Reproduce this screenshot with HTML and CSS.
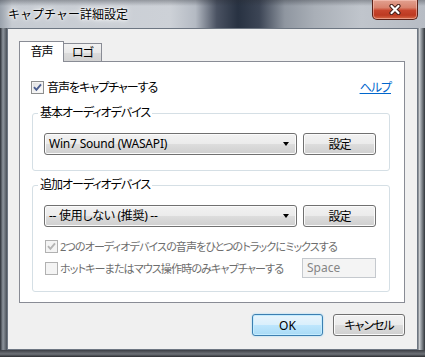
FILE: index.html
```html
<!DOCTYPE html>
<html lang="ja">

<head>
    <meta charset="UTF-8">
    <title>キャプチャー詳細設定</title>
    <link rel="stylesheet" href="styles.css">
</head>

<body>
    <div class="window">
        <!-- 타이틀 바 -->
        <div class="titlebar">
            <span class="title">キャプチャー詳細設定</span>
            <div class="close">
                <svg width="14" height="11" viewBox="0 0 14 11">
                    <path d="M3.5 2 L10.5 9 M10.5 2 L3.5 9" stroke="#47201a" stroke-width="4.2" stroke-linecap="round" fill="none" />
                    <path d="M3.5 2 L10.5 9 M10.5 2 L3.5 9" stroke="#fff" stroke-width="2.2" stroke-linecap="round" fill="none" />
                </svg>
            </div>
        </div>

        <div class="frame">
            <div class="client">
                <!-- 탭 -->
                <div class="tabs">
                    <div class="tab active">音声</div>
                    <div class="tab">ロゴ</div>
                </div>

                <div class="panel">
                    <div class="toprow">
                        <label class="check">
                            <span class="box">
                                <svg width="11" height="11" viewBox="0 0 11 11"><path d="M2 5.2 L4.4 7.8 L9 2.4" stroke="#4a5d8f" stroke-width="1.9" fill="none" /></svg>
                            </span>
                            音声をキャプチャーする
                        </label>
                        <a class="help" href="#">ヘルプ</a>
                    </div>

                    <fieldset class="group">
                        <legend>基本オーディオデバイス</legend>
                        <div class="devrow">
                            <div class="combo"><span class="latin">Win7 Sound (WASAPI)</span><span class="arrow"></span></div>
                            <div class="btn">設定</div>
                        </div>
                    </fieldset>

                    <fieldset class="group second">
                        <legend>追加オーディオデバイス</legend>
                        <div class="devrow">
                            <div class="combo"><span>-- 使用しない (推奨) --</span><span class="arrow"></span></div>
                            <div class="btn">設定</div>
                        </div>
                        <label class="opt first disabled">
                            <span class="box off">
                                <svg width="11" height="11" viewBox="0 0 11 11"><path d="M2 5.2 L4.4 7.8 L9 2.4" stroke="#b4b4b4" stroke-width="1.9" fill="none" /></svg>
                            </span>
                            <span class="label">2つのオーディオデバイスの音声をひとつのトラックにミックスする</span>
                        </label>
                        <label class="opt disabled">
                            <span class="box off"></span>
                            <span class="label">ホットキーまたはマウス操作時のみキャプチャーする</span>
                            <span class="keybox">Space</span>
                        </label>
                    </fieldset>
                </div>

                <!-- 하단 버튼 -->
                <div class="footer">
                    <div class="btn ok">OK</div>
                    <div class="btn cancel">キャンセル</div>
                </div>
            </div>
        </div>
    </div>
</body>

</html>
```

FILE: styles.css
```css
/* 초기화 */
* {
    box-sizing: border-box;
}

body {
    margin: 0;
    background: #2f333a;
    font-family: "Noto Sans", "Noto Sans CJK JP", sans-serif;
    font-size: 12px;
    font-feature-settings: "palt";
    letter-spacing: -1px;
    color: #000;
}

/* 창 */
.window {
    width: 425px;
    height: 357px;
    display: flex;
    flex-direction: column;
    overflow: hidden;
}

.titlebar {
    height: 28px;
    flex: none;
    display: flex;
    justify-content: space-between;
    align-items: flex-start;
    padding-left: 8px;
    background:
        linear-gradient(to bottom, rgba(40, 44, 52, .35) 0, rgba(255, 255, 255, 0) 6px),
        linear-gradient(to right, #9aa2ac 0, #c6cbd2 12px, #cdd1d7 40%, #b4bac3 46%, #4a5262 51%, #283242 56%, #3c4555 61%, #8f96a0 67%, #a9afb7 74%, #c0c5cc 85%, #b7bcc4 100%);
}

.title {
    font-family: "Noto Sans CJK JP", sans-serif;
    font-feature-settings: normal;
    letter-spacing: 0;
    font-size: 12px;
    line-height: 16px;
    margin-top: 6px;
    text-shadow: 0 0 4px #fff, 0 0 8px #fff, 0 0 2px #fff;
}

.close {
    width: 46px;
    height: 20px;
    margin-right: 7px;
    display: flex;
    justify-content: center;
    align-items: center;
    border: 1px solid #5a2219;
    border-top: none;
    border-radius: 0 0 5px 5px;
    background: linear-gradient(to bottom, #e2a190 0, #d8826d 40%, #c7452d 55%, #bd3a22 80%, #d66a48 100%);
    box-shadow: inset 0 0 0 1px rgba(255, 210, 200, .5);
}

.frame {
    flex: 1;
    padding: 0 7px 7px;
    background:
        linear-gradient(to bottom, rgba(0, 0, 0, 0) 0, rgba(0, 0, 0, 0) 322px, #3c3f45 322px, #6e7278 326px, #2b2d31 329px),
        linear-gradient(to right, #2a2e35 0, #8e959d 3px, #4a5058 7px, #4a5058 418px, #d5d8dc 419px, #9ba1a7 421px, #30343a 425px);
}

.client {
    height: 322px;
    border: 1px solid #6d7682;
    background: #f0f0f0;
    padding: 12px 12px 0 11px;
}

/* 탭 */
.tabs {
    display: flex;
    align-items: flex-end;
    height: 20px;
    position: relative;
    z-index: 1;
}

.tab {
    width: 38px;
    height: 18px;
    line-height: 17px;
    text-align: center;
    border: 1px solid #898c95;
    border-left: none;
    border-bottom: none;
    background: linear-gradient(to bottom, #f2f2f2 0, #e9e9e9 50%, #dcdcdc 50%, #d3d3d3 100%);
}

.tab.active {
    width: 45px;
    height: 21px;
    line-height: 19px;
    margin-bottom: -1px;
    border-left: 1px solid #898c95;
    background: #fff;
}

.panel {
    height: 242px;
    border: 1px solid #898c95;
    background: #fff;
    padding: 17px 13px 0 11px;
}

.toprow {
    display: flex;
    justify-content: space-between;
    align-items: center;
    height: 16px;
}

.check {
    display: flex;
    align-items: center;
    gap: 3px;
}

.box {
    width: 13px;
    height: 13px;
    flex: none;
    border: 1px solid #8e8f8f;
    background: linear-gradient(135deg, #dcdcdc 0, #f6f6f6 70%, #fff 100%);
    box-shadow: inset 0 0 0 1px #f4f4f4;
}

.box svg {
    display: block;
}

.box.off {
    border-color: #b1b1b1;
    background: #f4f4f4;
}

.help {
    color: #0066cc;
}

/* 그룹 박스 */
.group {
    margin: 10px 1px 0 1px;
    border: 1px solid #d5dfe5;
    border-radius: 3px;
    padding: 12px 13px 15px 11px;
    min-width: 0;
}

.group legend {
    margin-left: -6px;
    padding: 0 2px;
    line-height: 16px;
}

.group.second {
    margin-top: 6px;
    padding-bottom: 12px;
}

.devrow {
    display: flex;
    gap: 6px;
}

.combo,
.btn {
    height: 22px;
    border: 1px solid #707070;
    border-radius: 3px;
    background: linear-gradient(to bottom, #f2f2f2 0, #ebebeb 50%, #dddddd 50%, #cfcfcf 100%);
    box-shadow: inset 0 0 0 1px #fbfbfb;
}

.combo {
    width: 253px;
    display: flex;
    justify-content: space-between;
    align-items: center;
    padding: 0 7px 0 4px;
    line-height: 20px;
    letter-spacing: -0.3px;
}

.combo .latin {
    letter-spacing: -0.2px;
}

.arrow {
    width: 0;
    height: 0;
    border-left: 3.5px solid transparent;
    border-right: 3.5px solid transparent;
    border-top: 4px solid #000;
}

.btn {
    width: 73px;
    display: flex;
    justify-content: center;
    align-items: center;
}

.opt {
    display: flex;
    align-items: center;
    height: 22px;
    gap: 2px;
    white-space: nowrap;
}

.opt .label {
    font-size: 11px;
    letter-spacing: -0.85px;
}

.opt .box {
    margin-left: 1px;
}

.opt.first {
    margin-top: 8px;
}

.opt.disabled {
    color: #6d6d6d;
}

.keybox {
    margin-left: auto;
    width: 74px;
    height: 20px;
    border: 1px solid #c5c9ce;
    background: #f4f4f4;
    color: #858585;
    padding-left: 4px;
    line-height: 18px;
    letter-spacing: 0;
}

/* 하단 */
.footer {
    display: flex;
    justify-content: flex-end;
    gap: 10px;
    padding-top: 11px;
}

.btn.ok {
    width: 71px;
    letter-spacing: 0;
    border-color: #3c7fb1;
    background: linear-gradient(to bottom, #e9f5fc 0, #d9effc 50%, #bee6fd 50%, #a9dbf6 100%);
    box-shadow: inset 0 0 0 1px #c4ecff, 0 0 2px #8fd3f5;
}

.btn.cancel {
    width: 72px;
}
```
